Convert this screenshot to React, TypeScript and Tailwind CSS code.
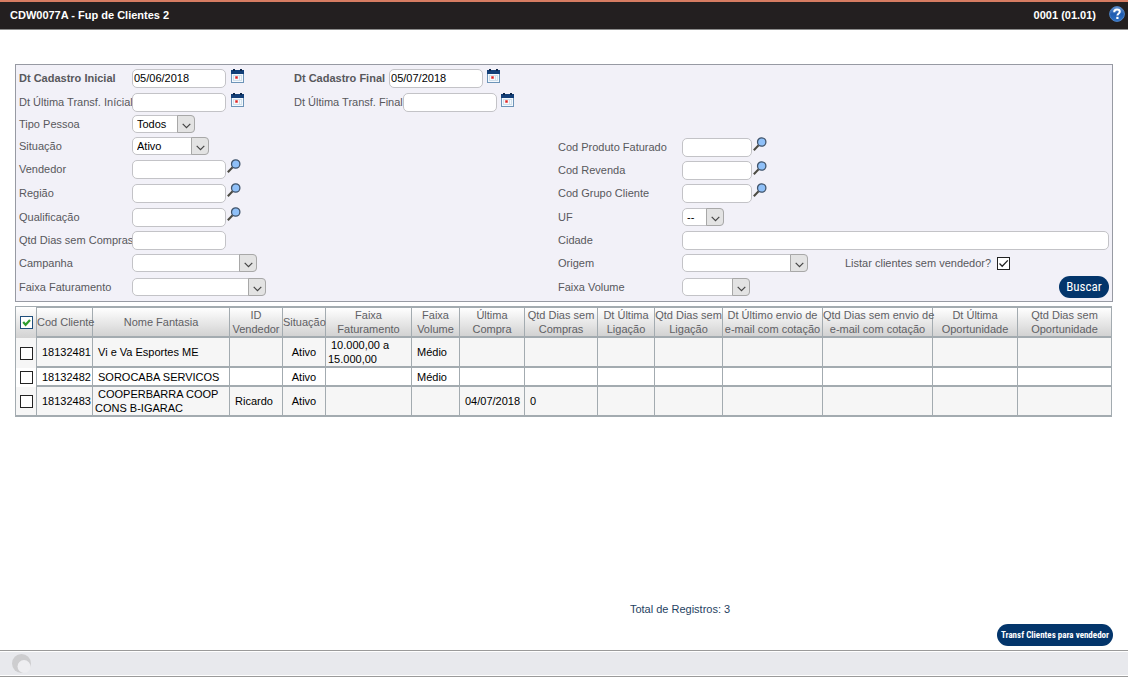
import { useState, type ReactNode } from "react";
import clsx from "clsx";

const columns = [
  { title: "Cod Cliente", width: 56 },
  { title: "Nome Fantasia", width: 137 },
  { title: "ID\nVendedor", width: 53 },
  { title: "Situação", width: 43 },
  { title: "Faixa\nFaturamento", width: 86 },
  { title: "Faixa\nVolume", width: 48 },
  { title: "Última\nCompra", width: 65 },
  { title: "Qtd Dias sem\nCompras", width: 73 },
  { title: "Dt Última\nLigação", width: 57 },
  { title: "Qtd Dias sem\nLigação", width: 68 },
  { title: "Dt Último envio de\ne-mail com cotação", width: 100 },
  { title: "Qtd Dias sem envio de\ne-mail com cotação", width: 110 },
  { title: "Dt Última\nOportunidade", width: 85 },
  { title: "Qtd Dias sem\nOportunidade", width: 94 },
];

const rows = [
  ["18132481", "Vi e Va Esportes ME", "", "Ativo", "10.000,00 a\n15.000,00", "Médio", "", "", "", "", "", "", "", ""],
  ["18132482", "SOROCABA SERVICOS", "", "Ativo", "", "Médio", "", "", "", "", "", "", "", ""],
  ["18132483", "COOPERBARRA COOP\nCONS B-IGARAC", "Ricardo", "Ativo", "", "", "04/07/2018", "0", "", "", "", "", "", ""],
];

function CalendarIcon() {
  return (
    <svg width="13" height="14" viewBox="0 0 13 14" className="block">
      <rect x="0.5" y="2.5" width="12" height="11" fill="#f4f9fd" stroke="#6d94b8" />
      <path d="M0 1h13v4H0z" fill="#123f78" />
      <path d="M2 0h2v2H2zM9 0h2v2H9z" fill="#0c2549" />
      <path d="M2 6.5h9M2 11.5h9M2.5 6v6M8.5 6v6M10.5 6v6" stroke="#cfdfeb" />
      <rect x="4" y="7" width="3" height="3" fill="#f3a3a3" />
      <rect x="4.5" y="7.5" width="2" height="2" fill="#dc1f1f" />
    </svg>
  );
}

function SearchIcon() {
  return (
    <svg width="14" height="14" viewBox="0 0 14 14" className="block">
      <path d="M0.8 13.2L5.6 8.2" stroke="#4b4a42" strokeWidth="2" />
      <circle cx="8.7" cy="5" r="4.2" fill="#8fc0f8" stroke="#40546b" strokeWidth="1.3" />
    </svg>
  );
}

function HelpIcon() {
  return (
    <svg width="16" height="16" viewBox="0 0 16 16" className="block">
      <defs>
        <linearGradient id="help" x1="0" y1="0" x2="0" y2="1">
          <stop offset="0" stopColor="#6a97d3" />
          <stop offset="0.5" stopColor="#1f5bb0" />
          <stop offset="1" stopColor="#2f72c6" />
        </linearGradient>
      </defs>
      <circle cx="8" cy="8" r="7.4" fill="url(#help)" stroke="#4d80c2" />
      <path
        d="M5.2 6.2C5.2 4.4 6.4 3.6 8 3.6s2.8.9 2.8 2.2c0 1.7-2.4 1.8-2.4 3.8"
        fill="none"
        stroke="#fff"
        strokeWidth="2"
      />
      <rect x="7.3" y="10.8" width="2.2" height="2.2" fill="#fff" />
    </svg>
  );
}

function IconButton({ label, children }: { label: string; children: ReactNode }) {
  return (
    <button type="button" aria-label={label} className="mt-0.5 shrink-0 cursor-pointer self-start">
      {children}
    </button>
  );
}

type InputProps = { id: string; className: string; value?: string };

function TextInput({ id, className, value = "" }: InputProps) {
  return (
    <input
      id={id}
      type="text"
      defaultValue={value}
      className={clsx("h-[19px] rounded-[5px] border border-[#c3c3c7] bg-white pl-px text-black outline-none", className)}
    />
  );
}

function Select({ id, className, value = "" }: InputProps) {
  return (
    <span className={clsx("relative block h-[18px] shrink-0", className)}>
      <select
        id={id}
        className="block h-full w-full appearance-none rounded-[5px] border border-[#c3c3c7] bg-white pl-1 text-black outline-none"
      >
        <option>{value}</option>
      </select>
      <span className="pointer-events-none absolute inset-y-0 right-0 flex w-[18px] items-center justify-center rounded-r-[4px] border border-[#a8a8a8] bg-[#e3e3e3]">
        <svg width="9" height="6" viewBox="0 0 9 6" className="mt-1">
          <path d="M0.7 0.8L4.5 4.6L8.3 0.8" fill="none" stroke="#444" strokeWidth="1.2" />
        </svg>
      </span>
    </span>
  );
}

type CheckboxProps = {
  checked: boolean;
  onChange: (checked: boolean) => void;
  id?: string;
  label?: string;
  green?: boolean;
};

function Checkbox({ checked, onChange, id, label, green }: CheckboxProps) {
  return (
    <span className="relative block size-[13px] shrink-0">
      <input
        id={id}
        type="checkbox"
        aria-label={label}
        checked={checked}
        onChange={(e) => onChange(e.target.checked)}
        className={clsx("block size-full appearance-none border bg-white", green ? "border-[#1f4f7c]" : "border-[#222]")}
      />
      {checked && (
        <svg viewBox="0 0 13 13" className="pointer-events-none absolute inset-0">
          <path
            d={green ? "M3.2 6L5.6 8.8L10 4" : "M2.5 6.5L5.2 9.2L10.8 3.4"}
            fill="none"
            stroke={green ? "#2f9e2f" : "#222"}
            strokeWidth={green ? 2.2 : 1.3}
          />
        </svg>
      )}
    </span>
  );
}

function Field({ id, label, className, bold, children }: { id: string; label: string; className: string; bold?: boolean; children: ReactNode }) {
  return (
    <div className={clsx("flex items-center", className)}>
      <label htmlFor={id} className={clsx("w-[113px] shrink-0 whitespace-nowrap", bold && "font-bold")}>
        {label}
      </label>
      {children}
    </div>
  );
}

function RightField({ id, label, className, children }: { id: string; label: string; className: string; children: ReactNode }) {
  return (
    <div className={clsx("flex items-center", className)}>
      <label htmlFor={id} className="w-[124px] shrink-0 whitespace-nowrap">
        {label}
      </label>
      {children}
    </div>
  );
}

function Filters() {
  const [semVendedor, setSemVendedor] = useState(true);

  return (
    <form
      onSubmit={(e) => e.preventDefault()}
      className="grid grid-cols-[539fr_551fr] border border-[#979aa3] bg-[#f2f1f8] px-[3px] pb-[2px] text-[#58585c]"
    >
      <div>
        <Field id="cadIni" label="Dt Cadastro Inicial" className="h-6 pt-[2px]" bold>
          <TextInput id="cadIni" value="05/06/2018" className="w-[94px]" />
          <span className="mr-[50px] ml-[5px] self-start">
            <IconButton label="Abrir calendário"><CalendarIcon /></IconButton>
          </span>
          <label htmlFor="cadFim" className="mr-1 font-bold whitespace-nowrap">Dt Cadastro Final</label>
          <TextInput id="cadFim" value="05/07/2018" className="w-[94px]" />
          <span className="ml-1 self-start">
            <IconButton label="Abrir calendário"><CalendarIcon /></IconButton>
          </span>
        </Field>
        <Field id="transfIni" label="Dt Última Transf. Inícial" className="h-6 pt-[2px]">
          <TextInput id="transfIni" className="w-[94px]" />
          <span className="mr-[50px] ml-[5px] self-start">
            <IconButton label="Abrir calendário"><CalendarIcon /></IconButton>
          </span>
          <label htmlFor="transfFim" className="whitespace-nowrap">Dt Última Transf. Final</label>
          <TextInput id="transfFim" className="w-[94px]" />
          <span className="ml-1 self-start">
            <IconButton label="Abrir calendário"><CalendarIcon /></IconButton>
          </span>
        </Field>
        <Field id="tipo" label="Tipo Pessoa" className="h-[22px]">
          <Select id="tipo" value="Todos" className="w-[63px]" />
        </Field>
        <Field id="situacao" label="Situação" className="h-[22px]">
          <Select id="situacao" value="Ativo" className="w-[77px]" />
        </Field>
        <Field id="vendedor" label="Vendedor" className="h-6">
          <TextInput id="vendedor" className="mr-px w-[94px]" />
          <IconButton label="Pesquisar vendedor"><SearchIcon /></IconButton>
        </Field>
        <Field id="regiao" label="Região" className="h-6">
          <TextInput id="regiao" className="mr-px w-[94px]" />
          <IconButton label="Pesquisar região"><SearchIcon /></IconButton>
        </Field>
        <Field id="qualificacao" label="Qualificação" className="h-6">
          <TextInput id="qualificacao" className="mr-px w-[94px]" />
          <IconButton label="Pesquisar qualificação"><SearchIcon /></IconButton>
        </Field>
        <Field id="dias" label="Qtd Dias sem Compras" className="h-[22px]">
          <TextInput id="dias" className="w-[94px]" />
        </Field>
        <Field id="campanha" label="Campanha" className="h-6">
          <Select id="campanha" className="w-[125px]" />
        </Field>
        <Field id="faixaFat" label="Faixa Faturamento" className="h-6">
          <Select id="faixaFat" className="w-[134px]" />
        </Field>
      </div>

      <div className="flex flex-col justify-end">
        <RightField id="produto" label="Cod Produto Faturado" className="h-6">
          <TextInput id="produto" className="mr-px w-[70px]" />
          <IconButton label="Pesquisar produto"><SearchIcon /></IconButton>
        </RightField>
        <RightField id="revenda" label="Cod Revenda" className="h-[22px]">
          <TextInput id="revenda" className="mr-px w-[70px]" />
          <IconButton label="Pesquisar revenda"><SearchIcon /></IconButton>
        </RightField>
        <RightField id="grupo" label="Cod Grupo Cliente" className="h-6">
          <TextInput id="grupo" className="mr-px w-[70px]" />
          <IconButton label="Pesquisar grupo"><SearchIcon /></IconButton>
        </RightField>
        <RightField id="uf" label="UF" className="h-6">
          <Select id="uf" value="--" className="w-[42px]" />
        </RightField>
        <RightField id="cidade" label="Cidade" className="h-[22px]">
          <TextInput id="cidade" className="min-w-0 flex-1" />
        </RightField>
        <RightField id="origem" label="Origem" className="h-6">
          <Select id="origem" className="w-[126px]" />
          <label htmlFor="semVendedor" className="mr-[6px] ml-[37px] whitespace-nowrap">
            Listar clientes sem vendedor?
          </label>
          <Checkbox id="semVendedor" checked={semVendedor} onChange={setSemVendedor} />
        </RightField>
        <RightField id="faixaVol" label="Faixa Volume" className="h-6">
          <Select id="faixaVol" className="w-[68px]" />
          <button
            type="submit"
            className="ml-auto h-[22px] w-[50px] rounded-full bg-[#03356b] font-['Roboto_Condensed','Liberation_Sans_Narrow',Roboto,sans-serif] text-[13px] text-white"
          >
            Buscar
          </button>
        </RightField>
      </div>
    </form>
  );
}

function ClientTable() {
  const [allChecked, setAllChecked] = useState(true);
  const [selected, setSelected] = useState<string[]>([]);

  const toggle = (id: string, on: boolean) =>
    setSelected((prev) => (on ? [...prev, id] : prev.filter((s) => s !== id)));

  return (
    <div className="mt-1 pr-px">
      <table className="w-full table-fixed border-separate border-spacing-0 border-r border-[#a3abb0] leading-[14px]">
        <colgroup>
          <col width={21} />
          {columns.map((c) => (
            <col key={c.title} width={c.width} />
          ))}
        </colgroup>
        <thead>
          <tr className="h-8">
            <th className="border-t border-l border-[#a3abb0] bg-linear-to-b from-white to-[#d2d2d2] p-0 pl-1">
              <Checkbox checked={allChecked} onChange={setAllChecked} label="Selecionar todos" green />
            </th>
            {columns.map((c) => (
              <th
                key={c.title}
                className="border-y-2 border-l border-[#a3abb0] bg-linear-to-b from-white to-[#d2d2d2] p-0 text-center font-normal whitespace-pre text-[#606064]"
              >
                {c.title}
              </th>
            ))}
          </tr>
        </thead>
        <tbody className="text-black">
          {rows.map((row, i) => (
            <tr key={row[0]} className={i % 2 ? "h-[19px] bg-white" : "h-[30px] bg-[#f6f6f6]"}>
              <td className={clsx("border-l border-[#a3abb0] p-0 pl-1", i === rows.length - 1 && "border-b-2")}>
                <Checkbox
                  checked={selected.includes(row[0])}
                  onChange={(on) => toggle(row[0], on)}
                  label={`Selecionar ${row[0]}`}
                />
              </td>
              {row.map((cell, j) => (
                <td
                  key={j}
                  className={clsx(
                    "border-b-2 border-l border-[#a3abb0] p-0 whitespace-pre",
                    j === 3 ? "text-center" : "pl-[2px] indent-[3px]"
                  )}
                >
                  {cell}
                </td>
              ))}
            </tr>
          ))}
        </tbody>
      </table>
    </div>
  );
}

export default function App() {
  return (
    <div className="flex min-h-screen flex-col bg-white font-['Liberation_Sans',Arial,sans-serif] text-[11px] leading-[14px]">
      <header className="flex h-[30px] items-center border-t-2 border-b border-t-[#d67c62] border-b-[#8b8b8b] bg-[#231f20] pr-[3px] pb-[2px] pl-[10px] font-bold text-white">
        <h1>CDW0077A - Fup de Clientes 2</h1>
        <span className="mr-[13px] ml-auto">0001 (01.01)</span>
        <button type="button" aria-label="Ajuda" className="mb-0.5">
          <HelpIcon />
        </button>
      </header>

      <main className="flex flex-1 flex-col px-[15px] pt-[34px] pb-1">
        <Filters />
        <ClientTable />
        <p className="mt-auto mb-2 pl-[56%] whitespace-pre text-[#1f4262]">Total de Registros: 3</p>
        <button
          type="button"
          className="h-[22px] w-[116px] self-end rounded-full bg-[#03356b] font-['Roboto_Condensed','Liberation_Sans_Narrow',Roboto,sans-serif] text-[9px] font-bold whitespace-nowrap text-white"
        >
          Transf Clientes para vendedor
        </button>
      </main>

      <footer className="border-y border-[#9a9a9a] bg-white py-px">
        <div className="flex h-[23px] items-center bg-[#e8e9ed] pl-3">
          <svg width="19" height="19" viewBox="0 0 19 19">
            <circle cx="9.5" cy="9.5" r="9.5" fill="#cdcdcf" />
            <circle cx="12" cy="12.5" r="6.5" fill="#eeeef1" />
          </svg>
        </div>
      </footer>
    </div>
  );
}
